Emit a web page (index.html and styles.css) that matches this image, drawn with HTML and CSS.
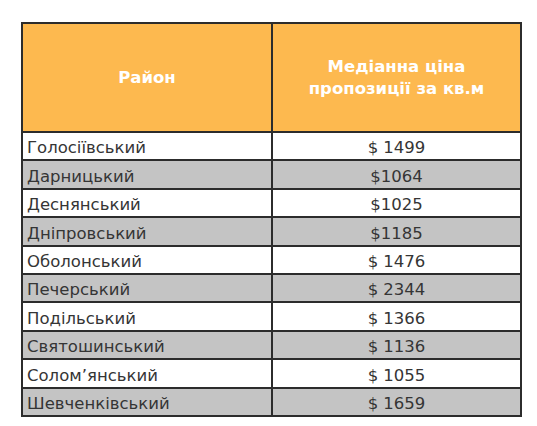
FILE: index.html
```html
<!DOCTYPE html>
<html lang="uk">
<head>
<meta charset="utf-8">
<link rel="stylesheet" href="styles.css">
</head>
<body>
<div class="page">
<table class="prices">
  <thead>
    <tr>
      <th class="col-district">Район</th>
      <th class="col-price">Медіанна ціна<br>пропозиції за кв.м</th>
    </tr>
  </thead>
  <tbody>
    <tr><td class="name">Голосіївський</td><td class="price">$ 1499</td></tr>
    <tr class="alt"><td class="name">Дарницький</td><td class="price">$1064</td></tr>
    <tr><td class="name">Деснянський</td><td class="price">$1025</td></tr>
    <tr class="alt"><td class="name">Дніпровський</td><td class="price">$1185</td></tr>
    <tr><td class="name">Оболонський</td><td class="price">$ 1476</td></tr>
    <tr class="alt"><td class="name">Печерський</td><td class="price">$ 2344</td></tr>
    <tr><td class="name">Подільський</td><td class="price">$ 1366</td></tr>
    <tr class="alt"><td class="name">Святошинський</td><td class="price">$ 1136</td></tr>
    <tr><td class="name">Солом’янський</td><td class="price">$ 1055</td></tr>
    <tr class="alt"><td class="name">Шевченківський</td><td class="price">$ 1659</td></tr>
  </tbody>
</table>
</div>
</body>
</html>
```

FILE: styles.css
```css
html, body {
  margin: 0;
  padding: 0;
  background: #ffffff;
}

.page {
  padding: 22px 0 0 21px;
}

.prices {
  border-collapse: collapse;
  width: 501px;
  table-layout: fixed;
  font-family: "DejaVu Sans", "Liberation Sans", sans-serif;
  color: #353535;
}

.prices th,
.prices td {
  border: 2px solid #2c2c2c;
}

.prices th {
  background: #fdb94f;
  color: #ffffff;
  font-weight: bold;
  font-size: 16.5px;
  line-height: 22px;
  height: 107px;
  text-align: center;
  vertical-align: middle;
  padding: 0;
}

.col-district {
  width: 248px;
}

.prices td {
  height: 24.4px;
  padding: 0 4px 2px 4px;
  font-size: 16.5px;
  line-height: 18px;
  vertical-align: bottom;
}

.prices .price {
  text-align: center;
}

.prices tr.alt td {
  background: #c4c4c4;
}
```
